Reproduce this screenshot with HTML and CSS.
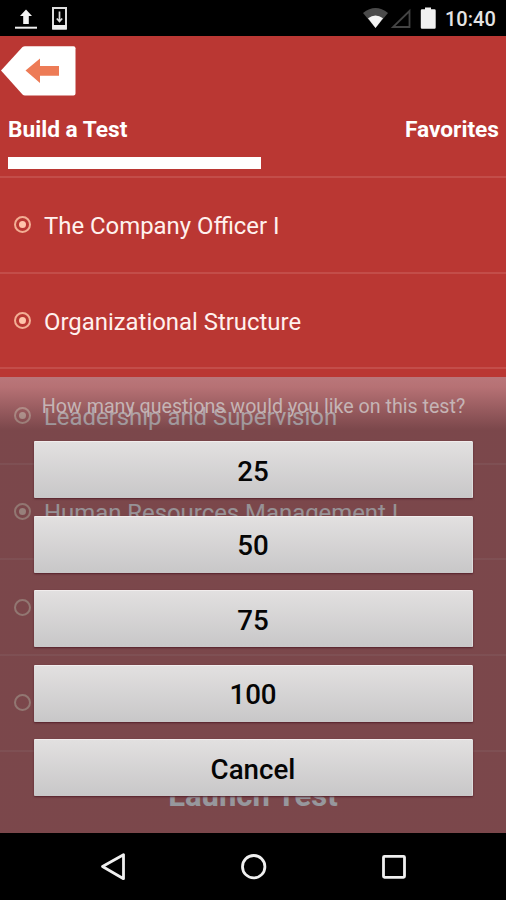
FILE: index.html
```
<!DOCTYPE html>
<html lang="en">
<head>
<meta charset="utf-8">
<title>Build a Test</title>
<link rel="stylesheet" href="styles.css">
</head>
<body>
<div class="phone">
  <header class="status">
    <svg class="status-left" width="60" height="36" viewBox="0 0 60 36">
      <path d="M26 9.500l6 6.600h-3.200v8h-5.600v-8H20z" fill="#f4f4f4"/>
      <path d="M15 27.700h22" stroke="#eee" stroke-width="2"/>
    </svg>
    <svg class="status-download" width="20" height="36" viewBox="0 0 20 36">
      <path d="M3 8h13v20.500H3z" fill="none" stroke="#ddd" stroke-width="2"/>
      <path d="M2.500 25h14v4.500h-14z" fill="#eee"/>
      <path d="M9.500 11.500v10M6.800 18.500l2.700 3 2.700-3" fill="none" stroke="#ddd" stroke-width="1.700"/>
    </svg>
    <svg class="status-right" width="80" height="36" viewBox="0 0 80 36">
      <path d="M3 13Q15.500 3 28 13L15.500 28z" fill="#4a4a4a"/>
      <path d="M8 18.300Q15.500 12.700 23 18.300L15.500 28z" fill="#f4f4f4"/>
      <path d="M49.500 11v16H33z" fill="none" stroke="#444" stroke-width="1.800"/>
      <path d="M65 7.500h6V9.300h3.500a1.200 1.200 0 0 1 1.200 1.200v17a1.200 1.200 0 0 1-1.200 1.200H62a1.200 1.200 0 0 1-1.200-1.200v-17a1.200 1.200 0 0 1 1.200-1.200h3z" fill="#f1f1f1"/>
    </svg>
    <span class="clock">10:40</span>
  </header>

  <main class="app">
    <svg class="back" width="80" height="60" viewBox="0 0 80 60">
      <path d="M1 34.500L22.500 11Q23.500 10.300 25 10.300H73.500a2 2 0 0 1 2 2V57.500a2 2 0 0 1-2 2H25Q23.500 59.500 22.500 58.500z" fill="#fff"/>
      <path d="M25.500 34.500L40 22.500V30h19v9.700H40v7.300z" fill="#ed7b56"/>
    </svg>
    <nav class="tabs"><span>Build a Test</span><span>Favorites</span></nav>
    <div class="indicator"></div>
    <ul class="topics">
      <li><i class="radio on"></i><span>The Company Officer I</span></li>
      <li><i class="radio on"></i><span>Organizational Structure</span></li>
      <li><i class="radio on"></i><span>Leadership and Supervision</span></li>
      <li><i class="radio on"></i><span>Human Resources Management I</span></li>
      <li><i class="radio"></i></li>
      <li><i class="radio"></i></li>
    </ul>
    <div class="launch">Launch Test</div>

    <section class="sheet">
      <p>How many questions would you like on this test?</p>
      <div class="choices">
        <button>25</button>
        <button>50</button>
        <button>75</button>
        <button>100</button>
        <button>Cancel</button>
      </div>
    </section>
  </main>

  <footer class="navbar">
    <svg width="30" height="30" viewBox="0 0 30 30"><path d="M4.500 14.500L25.500 2.700v24z"/></svg>
    <svg width="30" height="30" viewBox="0 0 30 30"><circle cx="14.700" cy="14.700" r="11.200"/></svg>
    <svg width="30" height="30" viewBox="0 0 30 30"><rect x="4.500" y="4.300" width="21" height="21" rx="1"/></svg>
  </footer>
</div>
</body>
</html>
```

FILE: styles.css
```
* { box-sizing: border-box; }
body { margin: 0; background: #000; font-family: Roboto, "Liberation Sans", sans-serif; }
.phone { width: 506px; height: 900px; display: flex; flex-direction: column; overflow: hidden; }

.status { height: 36px; flex: none; display: flex; align-items: center; background: #000; }
.status-left { margin-right: -10px; }
.status-right { margin-left: 290px; }
.clock { margin: 2px 0 0 5px; font-size: 20px; line-height: 24px; font-weight: 500; color: #e4e4e4; }

.app { position: relative; height: 797px; flex: none; background: #ba3733; color: #fff; overflow: hidden; }
.back { display: block; }
.tabs { display: flex; justify-content: space-between; padding: 20px 7px 0 8px; font-size: 22.7px; line-height: 28px; font-weight: 700; }
.indicator { width: 253px; height: 12px; margin: 13px 0 0 8px; background: #fff; }
.topics { list-style: none; margin: 7px 0 0; padding: 0; border-top: 2px solid #c34d49; }
.topics li { height: 95.6px; display: flex; align-items: center; gap: 13px; padding: 0 0 0 14px; border-bottom: 2px solid #c34d49; font-size: 23.9px; line-height: 30px; color: #fff1ee; }
.topics span { padding-top: 3px; white-space: nowrap; }
.radio { width: 17px; height: 17px; flex: none; border: 2px solid #f3ae94; border-radius: 50%; display: flex; align-items: center; justify-content: center; }
.radio.on::after { content: ""; width: 7px; height: 7px; border-radius: 50%; background: #ffc5ab; }
.launch { margin-top: 27px; text-align: center; font-size: 31px; line-height: 34px; font-weight: 700; }

/* Translucent action sheet over the topic list */
.sheet { position: absolute; left: 0; right: 0; top: 341px; bottom: 0; padding: 17px 33px 0 34px;
  background: linear-gradient(rgba(185,160,169,.6) 0, rgba(180,152,160,.6) 10px, rgba(81,82,91,.6) 53px); }
.sheet p { margin: 0; font-size: 19.65px; line-height: 26px; text-align: center; color: #c5b4b5; white-space: nowrap; }
.choices { display: grid; grid-auto-rows: 57px; gap: 17.5px; margin-top: 21.4px; }
.choices button { border: 0; border-top: 1px solid #f1eded; border-right: 1px solid #ddd; border-radius: 1px; padding: 3px 0 0; background: linear-gradient(#e2e0e0, #c8c7c8); box-shadow: 0 1px 2px #54202a; font: 500 27.7px/32px Roboto, sans-serif; color: #050505; }

.navbar { flex: 1; display: flex; align-items: flex-start; justify-content: space-between; padding: 19px 97px 0 98px; background: #000; }
.navbar svg { fill: none; stroke: #f0f0f0; stroke-width: 2.8; stroke-linejoin: round; }
```
